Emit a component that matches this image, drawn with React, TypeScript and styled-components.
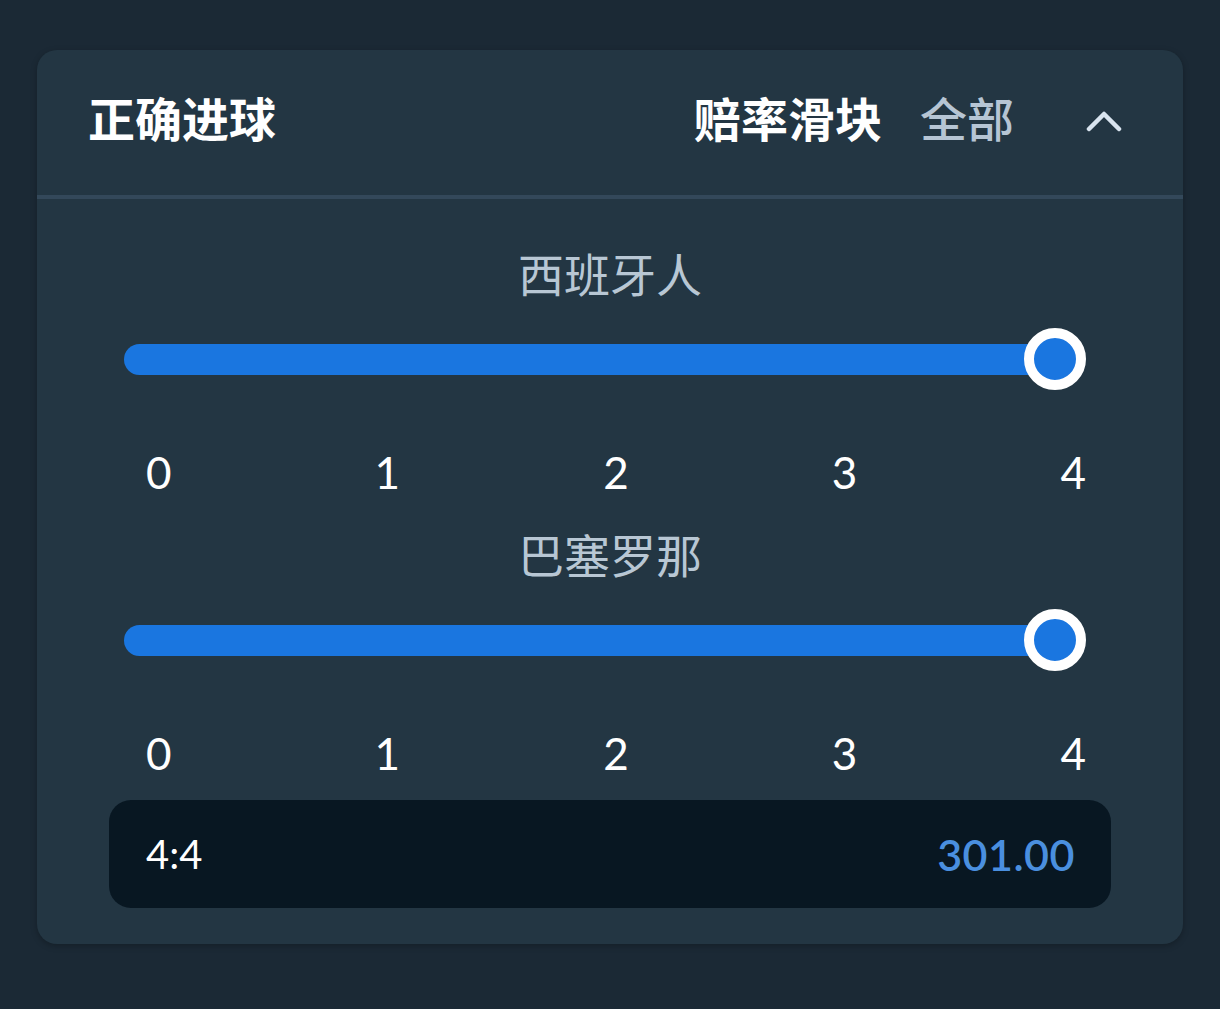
import React from "react";
import styled, { createGlobalStyle } from "styled-components";

const GlobalStyle = createGlobalStyle`
  html, body {
    margin: 0;
    padding: 0;
    background: #1b2935;
  }
  body {
    font-family: "Lato", "Noto Sans CJK SC", sans-serif;
    -webkit-font-smoothing: antialiased;
  }
`;

const Page = styled.div`
  width: 1220px;
  height: 1009px;
  padding: 50px 37px 0;
  box-sizing: border-box;
`;

const Card = styled.section`
  background: #233643;
  border-radius: 20px;
  overflow: hidden;
  box-shadow: 0 2px 6px rgba(0, 0, 0, 0.25);
`;

const Header = styled.header`
  height: 133px;
  display: flex;
  align-items: center;
  padding: 0 61px 12px 51px;
  border-bottom: 4px solid #33485a;
`;

const Title = styled.h2`
  margin: 0;
  flex: 1;
  font-family: "Noto Sans CJK SC", sans-serif;
  font-size: 47px;
  font-weight: 700;
  color: #ffffff;
`;

const HeaderAction = styled.span<{ muted?: boolean }>`
  font-family: "Noto Sans CJK SC", sans-serif;
  font-size: 47px;
  font-weight: ${(p) => (p.muted ? 500 : 700)};
  color: ${(p) => (p.muted ? "#b6c5d4" : "#ffffff")};
  margin-right: ${(p) => (p.muted ? 72 : 38)}px;
`;

const Chevron = styled.svg`
  width: 36px;
  height: 22px;
  display: block;
  margin-top: 8px;
`;

const Body = styled.div`
  padding: 45px 72px 36px;
`;

const Section = styled.div`
  & + & {
    margin-top: 29px;
  }
`;

const TeamLabel = styled.div`
  height: 56px;
  line-height: 56px;
  text-align: center;
  font-family: "Noto Sans CJK SC", sans-serif;
  font-size: 46px;
  font-weight: 400;
  color: #b8c7d4;
`;

const SliderWrap = styled.div`
  height: 118px;
  margin: 0 25px 0 15px;
  display: flex;
  align-items: center;
`;

const Track = styled.div`
  position: relative;
  flex: 1;
  height: 31px;
  margin-right: 31px;
  border-radius: 16px 0 0 16px;
  background: #1a76e0;
`;

const Thumb = styled.div`
  position: absolute;
  top: 50%;
  width: 62px;
  height: 62px;
  box-sizing: border-box;
  border-radius: 50%;
  border: 10px solid #ffffff;
  background: #1a76e0;
  transform: translate(-50%, -50%);
`;

const Ticks = styled.div`
  margin: 30px 25px 0 37px;
  height: 48px;
  display: flex;
  justify-content: space-between;
  align-items: center;
`;

const Tick = styled.span`
  font-size: 44px;
  line-height: 48px;
  color: #ffffff;
  font-weight: 400;
`;

const Result = styled.div`
  margin-top: 23px;
  height: 108px;
  border-radius: 22px;
  background: #081722;
  display: flex;
  align-items: center;
  justify-content: space-between;
  padding: 0 36px 0 37px;
`;

const Score = styled.span`
  font-size: 40px;
  color: #ffffff;
  font-weight: 400;
`;

const Odds = styled.span`
  font-size: 43px;
  font-weight: 600;
  color: #4a8fdf;
  letter-spacing: 0.5px;
`;

type SliderProps = { label: string; value: number; max: number };

function ScoreSlider({ label, value, max }: SliderProps) {
  const ticks = Array.from({ length: max + 1 }, (_, i) => i);
  return (
    <Section>
      <TeamLabel>{label}</TeamLabel>
      <SliderWrap>
        <Track>
          <Thumb style={{ left: `${(value / max) * 100}%` }} />
        </Track>
      </SliderWrap>
      <Ticks>
        {ticks.map((t) => (
          <Tick key={t}>{t}</Tick>
        ))}
      </Ticks>
    </Section>
  );
}

export default function App() {
  return (
    <>
      <GlobalStyle />
      <Page>
        <Card>
          <Header>
            <Title>正确进球</Title>
            <HeaderAction>赔率滑块</HeaderAction>
            <HeaderAction muted>全部</HeaderAction>
            <Chevron viewBox="0 0 36 22">
              <path
                d="M3 19 L18 4 L33 19"
                fill="none"
                stroke="#d9e4ef"
                strokeWidth="4.5"
                strokeLinecap="round"
                strokeLinejoin="round"
              />
            </Chevron>
          </Header>
          <Body>
            <ScoreSlider label="西班牙人" value={4} max={4} />
            <ScoreSlider label="巴塞罗那" value={4} max={4} />
            <Result>
              <Score>4:4</Score>
              <Odds>301.00</Odds>
            </Result>
          </Body>
        </Card>
      </Page>
    </>
  );
}
